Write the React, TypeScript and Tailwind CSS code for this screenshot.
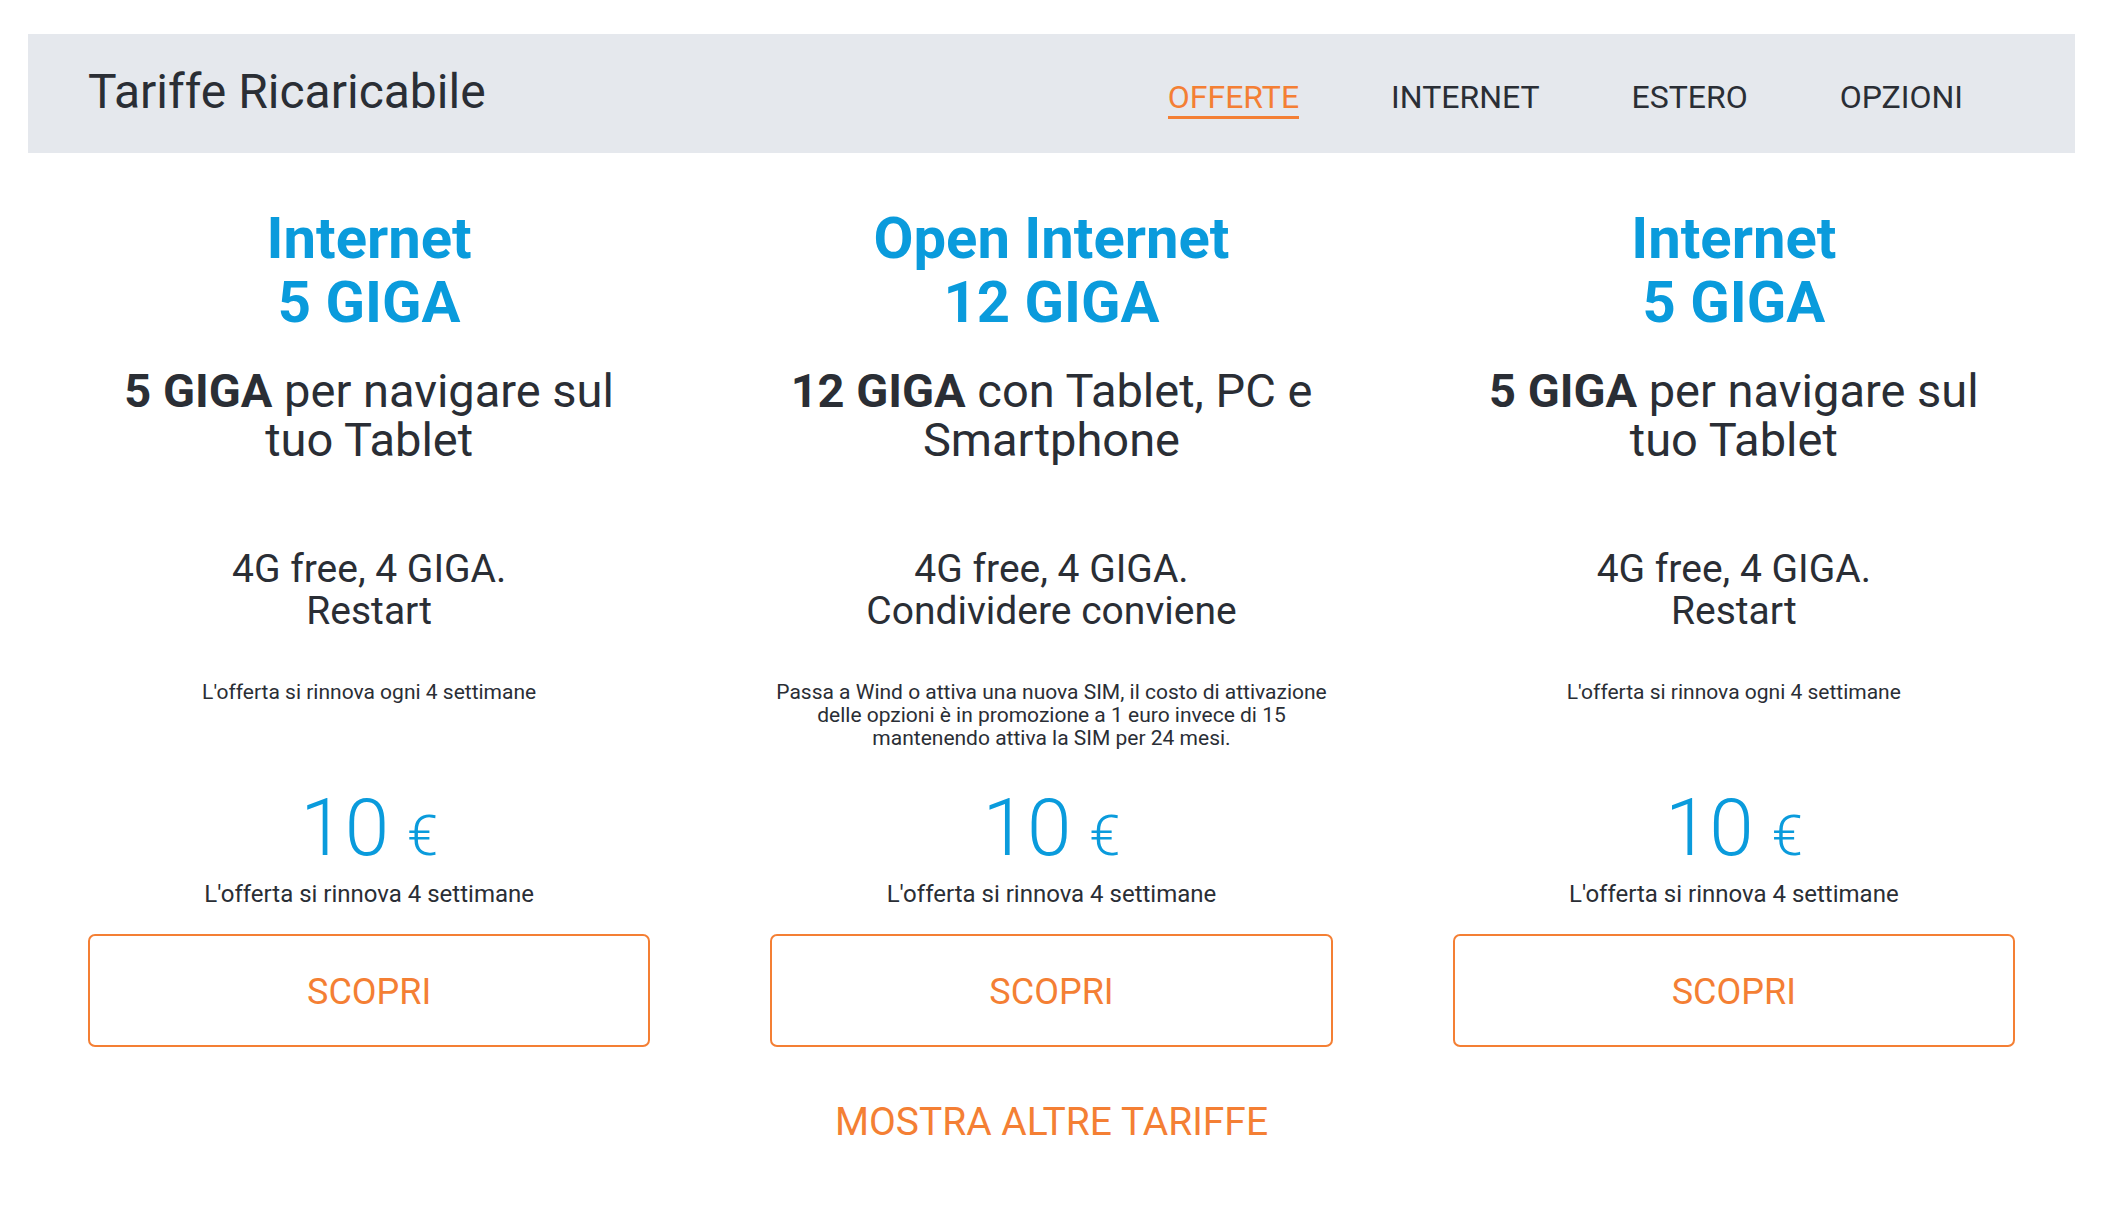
import React from "react";

const plans = [
  {
    title: ["Internet", "5 GIGA"],
    bold: "5 GIGA",
    rest: ["per navigare sul", "tuo Tablet"],
    feat: ["4G free, 4 GIGA.", "Restart"],
    note: ["L'offerta si rinnova ogni 4 settimane"],
  },
  {
    title: ["Open Internet", "12 GIGA"],
    bold: "12 GIGA",
    rest: ["con Tablet, PC e", "Smartphone"],
    feat: ["4G free, 4 GIGA.", "Condividere conviene"],
    note: [
      "Passa a Wind o attiva una nuova SIM, il costo di attivazione",
      "delle opzioni è in promozione a 1 euro invece di 15",
      "mantenendo attiva la SIM per 24 mesi.",
    ],
  },
  {
    title: ["Internet", "5 GIGA"],
    bold: "5 GIGA",
    rest: ["per navigare sul", "tuo Tablet"],
    feat: ["4G free, 4 GIGA.", "Restart"],
    note: ["L'offerta si rinnova ogni 4 settimane"],
  },
];

const nav = ["OFFERTE", "INTERNET", "ESTERO", "OPZIONI"];

function PlanCard({ plan }: { plan: (typeof plans)[number] }) {
  return (
    <div className="flex flex-col items-center px-[60px] text-center">
      <h2 className="mt-[53px] text-[58px] font-bold leading-[64px] text-[#0a9bdc]">
        {plan.title[0]}
        <br />
        {plan.title[1]}
      </h2>
      <p className="mt-[32px] text-[47px] leading-[49px] text-[#2a2e35]">
        <span className="font-bold">{plan.bold}</span> {plan.rest[0]}
        <br />
        {plan.rest[1]}
      </p>
      <p className="mt-[84px] text-[39px] leading-[42px] text-[#2a2e35]">
        {plan.feat[0]}
        <br />
        {plan.feat[1]}
      </p>
      <div className="mt-[49px] h-[106px] text-[21px] leading-[23px] text-[#2a2e35]">
        {plan.note.map((l) => (
          <div key={l}>{l}</div>
        ))}
      </div>
      <div className="flex h-[82px] items-baseline gap-[18px] text-[#0a9bdc]">
        <span className="text-[80px] font-light leading-[82px]">10</span>
        <span className="text-[56px] font-light leading-[82px]">€</span>
      </div>
      <p className="mt-[11px] text-[24px] leading-[28px] text-[#2a2e35]">
        L'offerta si rinnova 4 settimane
      </p>
      <button className="mt-[26px] flex h-[113px] w-full items-center justify-center rounded-[7px] border-2 border-[#f47f34] pt-[2px] text-[36px] text-[#f47f34]">
        SCOPRI
      </button>
    </div>
  );
}

export default function App() {
  return (
    <div
      className="min-h-screen bg-white pb-10"
      style={{ fontFamily: "Roboto, 'Liberation Sans', sans-serif" }}
    >
      <div className="ml-[28px] w-[2047px] pt-[34px]">
        <header className="flex h-[119px] items-start justify-between bg-[#e5e8ed] pl-[60px] pr-[112px]">
          <h1 className="pt-[34px] text-[48px] leading-[48px] text-[#2a2e35]">
            Tariffe Ricaricabile
          </h1>
          <nav className="flex gap-[92px] pt-[47px]">
            {nav.map((item, i) => (
              <a
                key={item}
                className={
                  i === 0
                    ? "flex flex-col text-[32px] leading-[32px] text-[#f47f34]"
                    : "flex flex-col text-[32px] leading-[32px] text-[#2a2e35]"
                }
              >
                {item}
                <span
                  className={
                    i === 0
                      ? "mt-[3px] h-[3px] bg-[#f47f34]"
                      : "mt-[3px] h-[3px] bg-transparent"
                  }
                />
              </a>
            ))}
          </nav>
        </header>

        <div className="grid grid-cols-3">
          {plans.map((p, i) => (
            <PlanCard key={i} plan={p} />
          ))}
        </div>

        <div className="mt-[53px] text-center">
          <a className="text-[39px] leading-[44px] text-[#f47f34]">
            MOSTRA ALTRE TARIFFE
          </a>
        </div>
      </div>
    </div>
  );
}
